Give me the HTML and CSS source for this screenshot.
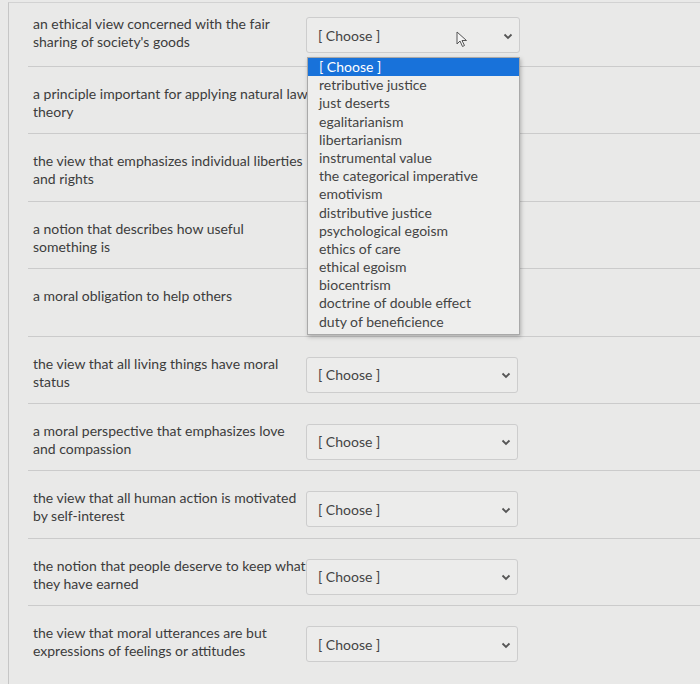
FILE: index.html
```html
<!DOCTYPE html>
<html>
<head>
    <title>Matching Question</title>
    <link rel="stylesheet" href="styles.css">
</head>
<body>
    <div class="quiz">
        <div class="row first">
            <div class="label">an ethical view concerned with the fair<br>sharing of society's goods</div>
            <div class="select-wrap">
                <div class="select">
                    <span>[ Choose ]</span>
                    <svg class="cursor" width="13" height="17" viewBox="0 0 13 17"><path d="M1 1 L1 13 L4 10 L6.5 15.5 L8.5 14.5 L6 9.5 L10.5 9.5 Z" fill="#f4f4f4" stroke="#555" stroke-width="1" stroke-linejoin="round"/></svg>
                    <svg class="chev" width="10" height="7" viewBox="0 0 10 7"><path d="M1.5 1.5 L5 5 L8.5 1.5" fill="none" stroke="#555" stroke-width="1.8"/></svg>
                </div>
                <ul class="dropdown">
                    <li class="active">[ Choose ]</li>
                    <li>retributive justice</li>
                    <li>just deserts</li>
                    <li>egalitarianism</li>
                    <li>libertarianism</li>
                    <li>instrumental value</li>
                    <li>the categorical imperative</li>
                    <li>emotivism</li>
                    <li>distributive justice</li>
                    <li>psychological egoism</li>
                    <li>ethics of care</li>
                    <li>ethical egoism</li>
                    <li>biocentrism</li>
                    <li>doctrine of double effect</li>
                    <li>duty of beneficience</li>
                </ul>
            </div>
        </div>
        <div class="row">
            <div class="label">a principle important for applying natural law<br>theory</div>
        </div>
        <div class="row">
            <div class="label">the view that emphasizes individual liberties<br>and rights</div>
        </div>
        <div class="row">
            <div class="label">a notion that describes how useful<br>something is</div>
        </div>
        <div class="row">
            <div class="label">a moral obligation to help others</div>
        </div>
        <div class="row">
            <div class="label">the view that all living things have moral<br>status</div>
            <div class="select"><span>[ Choose ]</span><svg class="chev" width="10" height="7" viewBox="0 0 10 7"><path d="M1.5 1.5 L5 5 L8.5 1.5" fill="none" stroke="#555" stroke-width="1.8"/></svg></div>
        </div>
        <div class="row">
            <div class="label">a moral perspective that emphasizes love<br>and compassion</div>
            <div class="select"><span>[ Choose ]</span><svg class="chev" width="10" height="7" viewBox="0 0 10 7"><path d="M1.5 1.5 L5 5 L8.5 1.5" fill="none" stroke="#555" stroke-width="1.8"/></svg></div>
        </div>
        <div class="row">
            <div class="label">the view that all human action is motivated<br>by self-interest</div>
            <div class="select"><span>[ Choose ]</span><svg class="chev" width="10" height="7" viewBox="0 0 10 7"><path d="M1.5 1.5 L5 5 L8.5 1.5" fill="none" stroke="#555" stroke-width="1.8"/></svg></div>
        </div>
        <div class="row">
            <div class="label">the notion that people deserve to keep what<br>they have earned</div>
            <div class="select"><span>[ Choose ]</span><svg class="chev" width="10" height="7" viewBox="0 0 10 7"><path d="M1.5 1.5 L5 5 L8.5 1.5" fill="none" stroke="#555" stroke-width="1.8"/></svg></div>
        </div>
        <div class="row last">
            <div class="label">the view that moral utterances are but<br>expressions of feelings or attitudes</div>
            <div class="select"><span>[ Choose ]</span><svg class="chev" width="10" height="7" viewBox="0 0 10 7"><path d="M1.5 1.5 L5 5 L8.5 1.5" fill="none" stroke="#555" stroke-width="1.8"/></svg></div>
        </div>
    </div>
</body>
</html>
```

FILE: styles.css
```css
* {
    margin: 0;
    padding: 0;
    box-sizing: border-box;
}
body {
    font-family: Lato, "Open Sans", sans-serif;
    background: #e9e9e8;
    color: #3c3c3c;
    font-size: 14px;
    overflow: hidden;
}
.quiz {
    margin: 2px 0 0 8px;
    border-left: 1px solid #c6c6c6;
    border-top: 1px solid #d2d2d2;
    padding-left: 19px;
    height: 700px;
}
.row {
    display: flex;
    align-items: flex-start;
    height: 67.4px;
    padding-top: 20px;
    border-bottom: 1px solid #cbcbcb;
}
.row.first {
    height: 64px;
    padding-top: 14px;
}
.row.last {
    border-bottom: none;
}
.label {
    flex: 0 0 278px;
    padding-left: 5px;
    line-height: 18px;
    margin-top: -2px;
    white-space: nowrap;
}
.select-wrap {
    position: relative;
}
.select {
    width: 212px;
    height: 36px;
    border: 1px solid #cdcdcd;
    border-radius: 3px;
    background: #ececeb;
    display: flex;
    align-items: center;
    justify-content: space-between;
    padding: 0 6px 0 11px;
    color: #444;
    position: relative;
}
.row.first .select {
    width: 214px;
}
.chev {
    margin-top: 2px;
}
.cursor {
    position: absolute;
    left: 149px;
    top: 13px;
}
.dropdown {
    position: absolute;
    top: 40px;
    left: 1px;
    width: 213px;
    list-style: none;
    background: #eeeeed;
    border: 1px solid #a9a9a9;
    box-shadow: 1px 2px 4px rgba(0, 0, 0, 0.25);
    padding-bottom: 3px;
    z-index: 10;
}
.dropdown li {
    height: 18.2px;
    line-height: 18px;
    padding-left: 11px;
    font-size: 14px;
    color: #444;
}
.dropdown li.active {
    background: #1872da;
    color: #fff;
}
```
